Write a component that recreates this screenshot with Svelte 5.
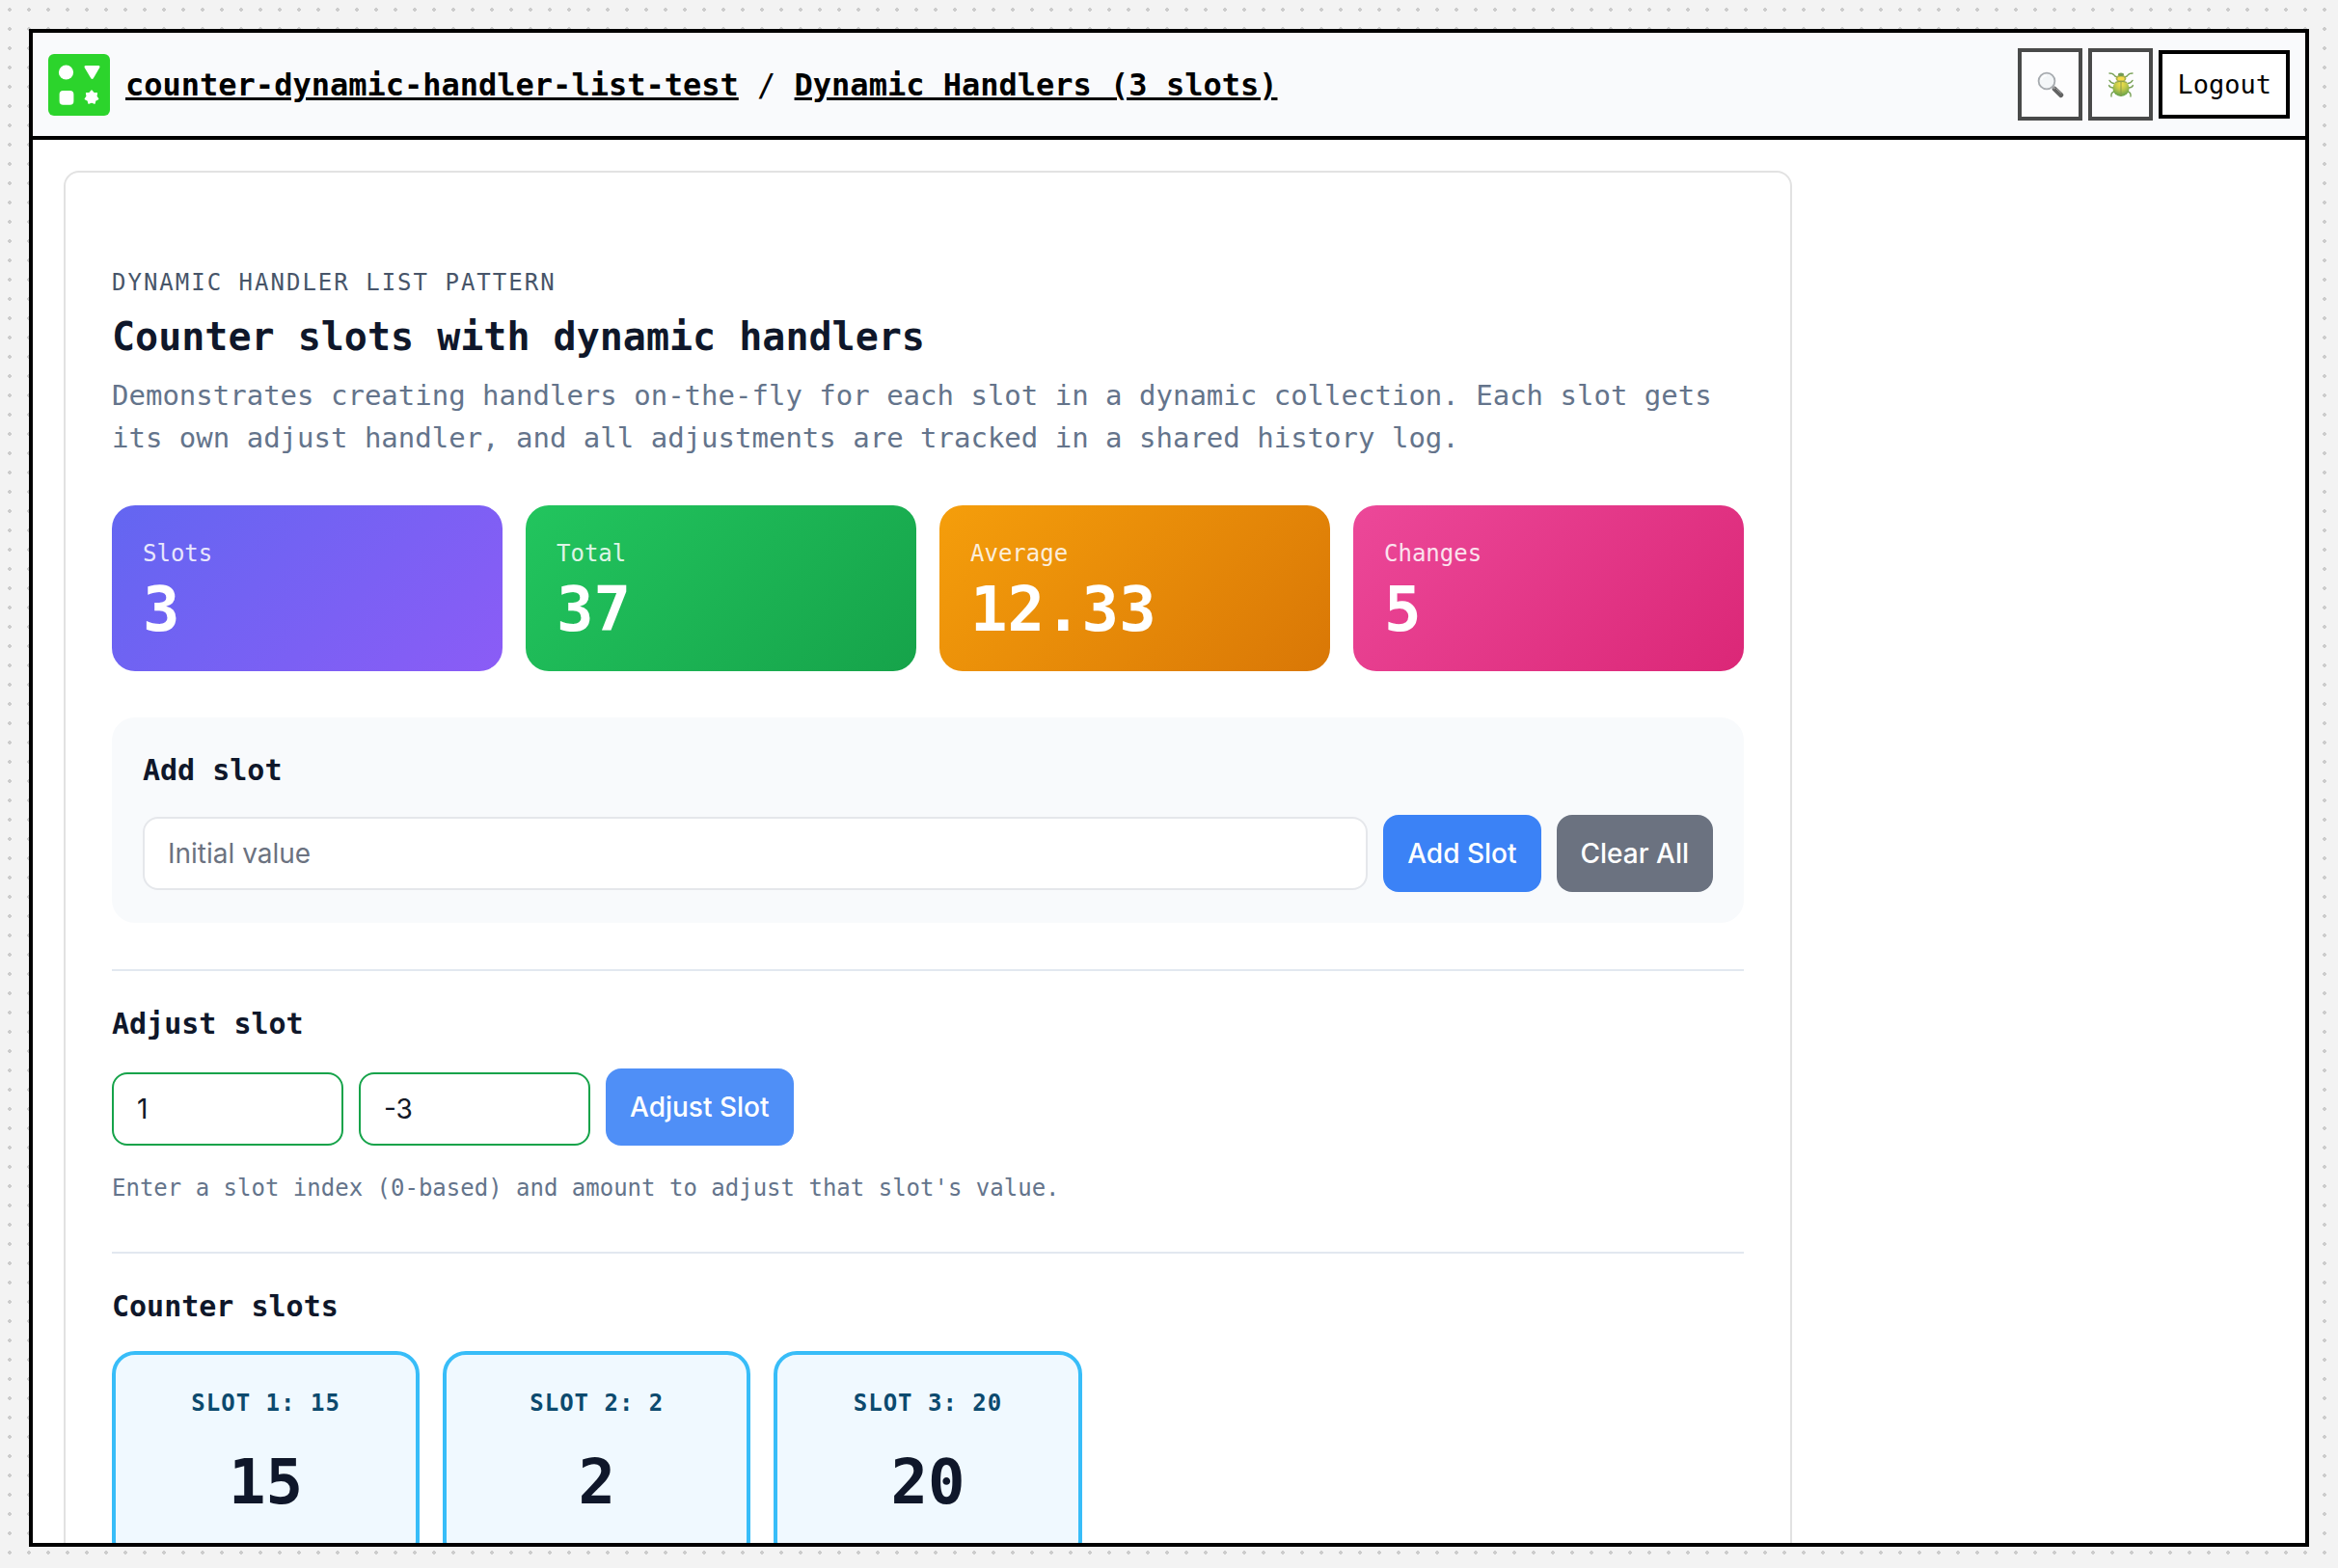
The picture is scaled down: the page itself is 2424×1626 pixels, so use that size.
<script>
  const stats = [
    { label: 'Slots', value: '3', tone: 'violet' },
    { label: 'Total', value: '37', tone: 'green' },
    { label: 'Average', value: '12.33', tone: 'amber' },
    { label: 'Changes', value: '5', tone: 'pink' },
  ];
  const slots = [15, 2, 20];
  let initial = $state('');
  let index = $state('1');
  let amount = $state('-3');
</script>

<div class="page">
  <div class="window">
    <header class="topbar">
      <a class="logo" href="#home" aria-label="Home">
        <svg viewBox="0 0 64 64" aria-hidden="true">
          <rect width="64" height="64" rx="6" fill="#2cd42c" />
          <g fill="#fff">
            <circle cx="18.5" cy="19" r="7.6" />
            <path d="M38.5 12H52.5Q54 12.3 53.3 14L46.8 25.3Q45.5 26.8 44.3 25.3L37.6 14Q37 12.3 38.5 12Z" />
            <rect x="11.6" y="38" width="14.8" height="14.8" rx="3.8" />
            <path d="M45 38L47.2 40.5L50.5 40.6L49.9 43.9L51.8 46.6L48.9 48.1L48 51.3L45 50L42 51.3L41.1 48.1L38.2 46.6L40.1 43.9L39.5 40.6L42.8 40.5Z" stroke="#fff" stroke-width="1.2" stroke-linejoin="round" />
          </g>
        </svg>
      </a>
      <nav class="crumbs">
        <a href="#space">counter-dynamic-handler-list-test</a> / <a href="#charm">Dynamic Handlers (3 slots)</a>
      </nav>
      <div class="actions">
        <button class="icon" aria-label="Search">
          <svg viewBox="0 0 28 28" aria-hidden="true">
            <path d="M18.2 18.2L24.8 24.6" stroke="#222" stroke-width="5" stroke-linecap="round" />
            <path d="M16 15.6L18.4 18" stroke="#777" stroke-width="2.2" />
            <path d="M20 18L25 22.6" stroke="#888" stroke-width="1" stroke-linecap="round" />
            <circle cx="10" cy="10" r="8.4" fill="#f1f5f7" stroke="#858b90" stroke-width="1.8" />
            <path d="M4.6 9A5.6 5.6 0 0 1 10 4.4" fill="none" stroke="#fff" stroke-width="1.6" />
          </svg>
        </button>
        <button class="icon" aria-label="Debug">
          <svg viewBox="0 0 28 28" aria-hidden="true">
            <defs>
              <radialGradient id="shell" cx="50%" cy="25%" r="75%">
                <stop offset="0" stop-color="#f5d800" />
                <stop offset=".45" stop-color="#a9b400" />
                <stop offset="1" stop-color="#1f7a00" />
              </radialGradient>
            </defs>
            <g fill="none" stroke="#457d14" stroke-width="1.4" stroke-linecap="round">
              <path d="M10.5 6Q7.5 5.5 6.5 3.5Q5.5 2 2 2M17.5 6Q20.5 5.5 21.5 3.5Q22.5 2 26 2" />
              <path d="M7 12.5Q4 12.6 2 9.4M21 12.5Q24 12.6 26 9.4M6 17Q2.6 16.8 1.6 14.6M22 17Q25.4 16.8 26.4 14.6M7 21Q3.4 22 4 26M21 21Q24.6 22 24 26" />
            </g>
            <ellipse cx="14" cy="17.6" rx="8.6" ry="8.4" fill="url(#shell)" />
            <ellipse cx="14" cy="7.4" rx="5.4" ry="3.8" fill="#8c9400" />
            <ellipse cx="14" cy="7.6" rx="3.6" ry="2.2" fill="#f5cf00" />
            <ellipse cx="14" cy="3.2" rx="3" ry="1.8" fill="#3a720c" />
            <path d="M14 11V26M7.8 11.4Q14 8.8 20.2 11.4" fill="none" stroke="#5c7500" stroke-width="1" />
          </svg>
        </button>
        <button class="logout">Logout</button>
      </div>
    </header>

    <main>
      <article class="card">
        <header class="intro">
          <p class="eyebrow">Dynamic handler list pattern</p>
          <h1>Counter slots with dynamic handlers</h1>
          <p class="lead">
            Demonstrates creating handlers on-the-fly for each slot in a dynamic collection. Each slot gets its own adjust
            handler, and all adjustments are tracked in a shared history log.
          </p>
        </header>

        <div class="stats">
          {#each stats as stat}
            <div class="stat {stat.tone}">
              <span class="name">{stat.label}</span>
              <strong>{stat.value}</strong>
            </div>
          {/each}
        </div>

        <section class="panel">
          <h2>Add slot</h2>
          <div class="row centred">
            <input class="grow" type="text" placeholder="Initial value" aria-label="Initial value" bind:value={initial} />
            <button class="primary">Add Slot</button>
            <button class="secondary">Clear All</button>
          </div>
        </section>

        <section class="block">
          <h2>Adjust slot</h2>
          <div class="row">
            <input class="valid" type="text" aria-label="Slot index" bind:value={index} />
            <input class="valid" type="text" aria-label="Amount" bind:value={amount} />
            <button class="primary hover">Adjust Slot</button>
          </div>
          <p class="hint">Enter a slot index (0-based) and amount to adjust that slot's value.</p>
        </section>

        <section class="block">
          <h2>Counter slots</h2>
          <div class="slots">
            {#each slots as value, i}
              <div class="slot">
                <span class="name">Slot {i + 1}: {value}</span>
                <strong>{value}</strong>
              </div>
            {/each}
          </div>
        </section>
      </article>
    </main>
  </div>
</div>

<style>
  :global(body) {
    margin: 0;
  }
  * {
    box-sizing: border-box;
  }
  .page {
    height: 100vh;
    padding: 30px 30px 22px;
    background: #f3f3f3 radial-gradient(circle at 10px 10px, #ccc 2px, transparent 2px) 0 0 / 20px 20px;
    font-family: 'DejaVu Sans Mono', monospace;
    font-size: 24px;
    line-height: 36px;
    color: #0f172a;
  }
  .window {
    display: flex;
    flex-direction: column;
    height: 100%;
    border: 4px solid #000;
    background: #fff;
    overflow: hidden;
  }
  .topbar {
    display: flex;
    flex-shrink: 0;
    align-items: center;
    gap: 16px;
    padding: 16px;
    border-bottom: 4px solid #000;
    background: #f9fafc;
    color: #000;
  }
  .logo svg {
    display: block;
    width: 64px;
    height: 64px;
  }
  .crumbs {
    flex: 1;
    font-size: 32px;
    line-height: 48px;
  }
  .crumbs a {
    color: #000;
    font-weight: 700;
    text-decoration-thickness: 3px;
  }
  .actions {
    display: flex;
    align-items: center;
    gap: 6px;
  }
  button,
  input {
    margin: 0;
    font-family: Inter, sans-serif;
    font-size: 28px;
  }
  .actions button {
    border: 4px solid #000;
    background: #fff;
    color: #000;
  }
  .actions .icon {
    display: grid;
    place-items: center;
    width: 67px;
    height: 75px;
    padding: 0;
    opacity: 0.7;
  }
  .icon svg {
    width: 28px;
    height: 28px;
  }
  .actions .logout {
    padding: 16px 15px;
    font-family: 'DejaVu Sans Mono', monospace;
    font-size: 27px;
    line-height: 31px;
  }
  main {
    flex: 1;
    min-height: 0;
    overflow: hidden;
    padding: 32px;
  }
  .card {
    max-width: 1792px;
    padding: 48px;
    border: 2px solid #e2e2e2;
    border-radius: 16px;
  }
  .intro {
    display: flex;
    flex-direction: column;
    gap: 8px;
    padding: 48px 0;
  }
  h1,
  h2,
  p {
    margin: 0;
  }
  .eyebrow {
    color: #475569;
    letter-spacing: 2px;
    text-transform: uppercase;
  }
  h1 {
    font-size: 40px;
    line-height: 61px;
  }
  .lead {
    color: #64748b;
    font-size: 29px;
    line-height: 44px;
  }
  .stats {
    display: grid;
    grid-template-columns: repeat(4, 1fr);
    gap: 24px;
    margin-bottom: 48px;
  }
  .stat {
    display: flex;
    flex-direction: column;
    gap: 8px;
    padding: 32px;
    border-radius: 24px;
    color: #fff;
  }
  .stat .name {
    opacity: 0.85;
  }
  .stat strong {
    font-size: 64px;
    line-height: 64px;
  }
  .violet {
    background: linear-gradient(135deg, #6366f1, #8b5cf6);
  }
  .green {
    background: linear-gradient(135deg, #22c55e, #16a34a);
  }
  .amber {
    background: linear-gradient(135deg, #f59e0b, #d97706);
  }
  .pink {
    background: linear-gradient(135deg, #ec4899, #db2777);
  }
  .panel {
    padding: 32px;
    border-radius: 24px;
    background: #f8fafc;
  }
  h2 {
    margin-bottom: 24px;
    font-size: 30px;
    line-height: 45px;
  }
  .row {
    display: flex;
    align-items: flex-end;
    gap: 16px;
  }
  .centred {
    align-items: center;
  }
  input {
    width: 240px;
    height: 76px;
    padding: 0 24px;
    border: 2px solid #e5e7eb;
    border-radius: 16px;
    background: #fff;
    color: #111827;
  }
  input::placeholder {
    color: #6b7280;
    opacity: 1;
  }
  .grow {
    flex: 1;
    width: auto;
    min-width: 0;
  }
  .valid {
    border-color: #16a34a;
  }
  .primary,
  .secondary {
    height: 80px;
    padding: 0 25px;
    border: 0;
    border-radius: 16px;
    color: #fff;
    font-weight: 500;
  }
  .primary {
    background: #3b82f6;
  }
  .hover {
    background: #4f8ff7;
  }
  .secondary {
    background: #6b7280;
  }
  .block {
    margin-top: 48px;
    padding-top: 32px;
    border-top: 2px solid #e2e8f0;
  }
  .hint {
    margin-top: 26px;
    color: #64748b;
  }
  .slots {
    display: grid;
    grid-template-columns: repeat(auto-fill, minmax(280px, 1fr));
    gap: 24px;
  }
  .slot {
    display: flex;
    flex-direction: column;
    align-items: center;
    gap: 16px;
    padding: 32px;
    border: 4px solid #38bdf8;
    border-radius: 24px;
    background: #f0f9ff;
  }
  .slot .name {
    color: #0c4a6e;
    font-weight: 700;
    letter-spacing: 1px;
    text-transform: uppercase;
  }
  .slot strong {
    font-size: 64px;
    line-height: 96px;
  }
</style>
